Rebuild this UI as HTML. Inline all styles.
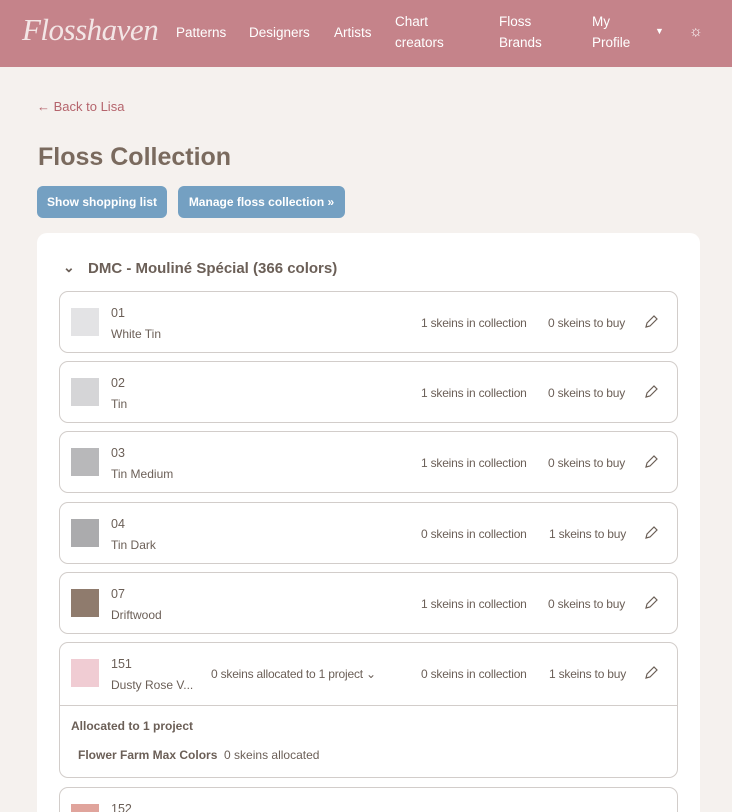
<html><head><style>
html,body{margin:0;width:732px;height:812px;overflow:hidden}
body{background:#f5f1ee;font-family:"Liberation Sans",sans-serif;color:#6b5f57;position:relative}
.nav{position:absolute;left:0;top:0;width:732px;height:67px;background:#c5838a;color:#fff;font-size:13.5px}
.nav span{position:absolute;line-height:21px}
.logo{position:absolute;left:22px;top:12px;font-family:"Liberation Serif",serif;font-style:italic;font-size:31px;color:#f3e6e6;letter-spacing:-0.5px}
a.back{position:absolute;left:37px;top:99px;color:#b5646c;font-size:13px;text-decoration:none}
h1{position:absolute;left:38px;top:143px;margin:0;font-size:25px;color:#7a6a5e}
.btn{position:absolute;top:186px;height:32px;line-height:32px;background:#74a0c2;color:#fff;border-radius:6px;font-size:12px;font-weight:bold;text-align:center}
.card{position:absolute;left:37px;top:233px;width:663px;height:600px;background:#fff;border-radius:10px}
.hd{position:absolute;left:88px;top:260px;font-size:15px;font-weight:bold;color:#6b5f57}
.row{position:absolute;left:59px;width:617px;height:60px;border:1px solid #d2cdca;border-radius:9px;background:#fff}
.sw{position:absolute;left:11px;top:16px;width:28px;height:28px}
.num{position:absolute;left:51px;top:14px;font-size:12.5px}
.nm{position:absolute;left:51px;top:35px;font-size:12px}
.st{position:absolute;top:24px;font-size:12px;letter-spacing:-0.2px}
.pen{position:absolute;left:584px;top:23px}
</style></head><body>
<div class="nav"><div class="logo">Flosshaven</div>
<span style="left:176px;top:22px">Patterns</span><span style="left:249px;top:22px">Designers</span><span style="left:334px;top:22px">Artists</span>
<span style="left:395px;top:11px">Chart<br>creators</span><span style="left:499px;top:11px">Floss<br>Brands</span><span style="left:592px;top:11px">My<br>Profile</span>
<span style="left:655px;top:21px;font-size:9px">▼</span><span style="left:689px;top:21px;font-size:15px">☼</span></div>
<a class="back">← Back to Lisa</a>
<h1>Floss Collection</h1>
<div class="btn" style="left:37px;width:130px">Show shopping list</div>
<div class="btn" style="left:178px;width:167px">Manage floss collection »</div>
<div class="card"></div>
<div style="position:absolute;left:63px;top:259px;font-size:14px;font-weight:bold">⌄</div>
<div class="hd">DMC - Mouliné Spécial (366 colors)</div>

<div class="row" style="top:291px"><div class="sw" style="background:#e3e3e5"></div><div class="num">01</div><div class="nm">White Tin</div><div class="st" style="left:361px">1 skeins in collection</div><div class="st" style="left:488px">0 skeins to buy</div><svg class="pen" width="14" height="14" viewBox="0 0 14 14"><path d="M2 12l1-4 7-7 3 3-7 7z" fill="none" stroke="#6b5f57" stroke-width="1.2"/></svg></div>
<div class="row" style="top:361px"><div class="sw" style="background:#d5d5d7"></div><div class="num">02</div><div class="nm">Tin</div><div class="st" style="left:361px">1 skeins in collection</div><div class="st" style="left:488px">0 skeins to buy</div><svg class="pen" width="14" height="14" viewBox="0 0 14 14"><path d="M2 12l1-4 7-7 3 3-7 7z" fill="none" stroke="#6b5f57" stroke-width="1.2"/></svg></div>
<div class="row" style="top:431px"><div class="sw" style="background:#b8b8ba"></div><div class="num">03</div><div class="nm">Tin Medium</div><div class="st" style="left:361px">1 skeins in collection</div><div class="st" style="left:488px">0 skeins to buy</div><svg class="pen" width="14" height="14" viewBox="0 0 14 14"><path d="M2 12l1-4 7-7 3 3-7 7z" fill="none" stroke="#6b5f57" stroke-width="1.2"/></svg></div>
<div class="row" style="top:502px"><div class="sw" style="background:#ababad"></div><div class="num">04</div><div class="nm">Tin Dark</div><div class="st" style="left:361px">0 skeins in collection</div><div class="st" style="left:489px">1 skeins to buy</div><svg class="pen" width="14" height="14" viewBox="0 0 14 14"><path d="M2 12l1-4 7-7 3 3-7 7z" fill="none" stroke="#6b5f57" stroke-width="1.2"/></svg></div>
<div class="row" style="top:572px"><div class="sw" style="background:#8f7b6d"></div><div class="num">07</div><div class="nm">Driftwood</div><div class="st" style="left:361px">1 skeins in collection</div><div class="st" style="left:488px">0 skeins to buy</div><svg class="pen" width="14" height="14" viewBox="0 0 14 14"><path d="M2 12l1-4 7-7 3 3-7 7z" fill="none" stroke="#6b5f57" stroke-width="1.2"/></svg></div>
<div class="row" style="top:642px;height:134px"><div class="sw" style="background:#f0ccd3"></div><div class="num">151</div><div class="nm">Dusty Rose V...</div><div class="st" style="left:151px">0 skeins allocated to 1 project ⌄</div><div class="st" style="left:361px">0 skeins in collection</div><div class="st" style="left:489px">1 skeins to buy</div><svg class="pen" width="14" height="14" viewBox="0 0 14 14"><path d="M2 12l1-4 7-7 3 3-7 7z" fill="none" stroke="#6b5f57" stroke-width="1.2"/></svg>
<div style="position:absolute;left:0;right:0;top:62px;border-top:1px solid #d2cdca"></div>
<div style="position:absolute;left:11px;top:76px;font-size:12px;font-weight:bold">Allocated to 1 project</div>
<div style="position:absolute;left:18px;top:105px;font-size:12px"><b>Flower Farm Max Colors</b>&nbsp; 0 skeins allocated</div></div>
<div class="row" style="top:787px"><div class="sw" style="background:#e0a49c"></div><div class="num">152</div></div>
</body></html>
